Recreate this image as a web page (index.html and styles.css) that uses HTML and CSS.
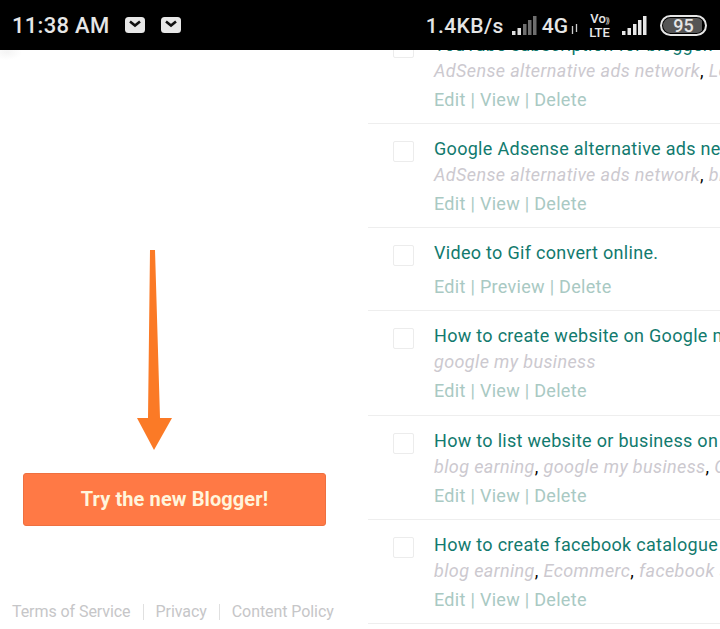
FILE: index.html
```html
<!DOCTYPE html>
<html lang="en">
<head>
<meta charset="utf-8">
<title>Blogger posts</title>
<link rel="stylesheet" href="styles.css">
</head>
<body>
<header class="status">
  <div class="status-left">
    <span class="time">11:38 AM</span>
    <svg class="mail" viewBox="0 0 20 20"><rect x="0" y="2" width="20" height="16" rx="3.5" fill="#e8e8e8"/><path d="M5 6.500l5 4L15 6.500" fill="none" stroke="#111" stroke-width="2.6"/></svg>
    <svg class="mail second" viewBox="0 0 20 20"><rect x="0" y="2" width="20" height="16" rx="3.5" fill="#e8e8e8"/><path d="M5 6.500l5 4L15 6.500" fill="none" stroke="#111" stroke-width="2.6"/></svg>
  </div>
  <div class="status-right">
    <span class="speed">1.4KB/s</span>
    <svg class="signal dim" viewBox="0 0 25 19"><g fill="#e0e0e0"><rect x="0" y="15" width="3.500" height="4"/><rect x="5.500" y="12" width="3.500" height="7"/></g><g fill="#6e6e6e"><rect x="11" y="8" width="3.500" height="11"/><rect x="16" y="4" width="3.500" height="15"/><rect x="21" y="0" width="3.500" height="19"/></g></svg>
    <span class="net">4G</span>
    <svg class="updown" viewBox="0 0 7 10"><path d="M1.500 10V2M5.500 0v8" stroke="#ccc" stroke-width="1.300" fill="none"/></svg>
    <span class="volte"><span>Vo<i>))</i></span><span>LTE</span></span>
    <svg class="signal full" viewBox="0 0 25 19"><rect x="0" y="15" width="3.500" height="4" fill="#e8e8e8"/><rect x="5.500" y="12" width="3.500" height="7" fill="#e8e8e8"/><rect x="11" y="8" width="3.500" height="11" fill="#e8e8e8"/><rect x="16" y="4" width="3.500" height="15" fill="#e8e8e8"/><rect x="21" y="0" width="3.500" height="19" fill="#e8e8e8"/></svg>
    <span class="battery">95</span>
  </div>
</header>
<main class="page">
  <section class="left">
    <svg class="arrow" viewBox="0 0 36 200"><path d="M14 0h5L24 168h12L18 200 1 168h11z" fill="#fb7a26"/></svg>
    <a class="cta">Try the new Blogger!</a>
    <footer class="legal">
      <span>Terms of Service</span><i></i><span>Privacy</span><i></i><span>Content Policy</span>
    </footer>
  </section>
  <section class="posts">
    <article class="post">
      <span class="check"></span>
      <div class="body">
        <h3>YouTube subscription for blogger. Web</h3>
        <p class="labels"><em>AdSense alternative ads network</em>, <em>Lead</em></p>
        <p class="actions">Edit | View | Delete</p>
      </div>
    </article>
    <article class="post">
      <span class="check"></span>
      <div class="body">
        <h3>Google Adsense alternative ads network</h3>
        <p class="labels"><em>AdSense alternative ads network</em>, <em>blog earning</em></p>
        <p class="actions">Edit | View | Delete</p>
      </div>
    </article>
    <article class="post short">
      <span class="check"></span>
      <div class="body">
        <h3>Video to Gif convert online.</h3>
        <p class="actions">Edit | Preview | Delete</p>
      </div>
    </article>
    <article class="post">
      <span class="check"></span>
      <div class="body">
        <h3>How to create website on Google my business</h3>
        <p class="labels"><em>google my business</em></p>
        <p class="actions">Edit | View | Delete</p>
      </div>
    </article>
    <article class="post">
      <span class="check"></span>
      <div class="body">
        <h3>How to list website or business on Google</h3>
        <p class="labels"><em>blog earning</em>, <em>google my business</em>, <em>Google</em></p>
        <p class="actions">Edit | View | Delete</p>
      </div>
    </article>
    <article class="post">
      <span class="check"></span>
      <div class="body">
        <h3>How to create facebook catalogue for shop</h3>
        <p class="labels"><em>blog earning</em>, <em>Ecommerc</em>, <em>facebook shop</em></p>
        <p class="actions">Edit | View | Delete</p>
      </div>
    </article>
  </section>
</main>
</body>
</html>
```
FILE: styles.css
```css
* { box-sizing: border-box; }
html, body { margin: 0; height: 629px; overflow: hidden; background: #fff; }
body { font-family: Roboto, "Liberation Sans", sans-serif; }

.status {
  position: relative;
  z-index: 2;
  height: 50px;
  background: #000;
  color: #e6e6e6;
  display: flex;
  justify-content: space-between;
  align-items: center;
  padding: 1px 13px 0 12px;
}
.status-left, .status-right { display: flex; align-items: center; }
.time { font-size: 22px; font-weight: 500; letter-spacing: .3px; margin-right: 15px; }
.mail { width: 20px; height: 20px; display: block; margin-top: -1px; }
.mail.second { margin-left: 16px; }
.speed { font-size: 21px; font-weight: 500; letter-spacing: .4px; }
.signal { width: 25px; height: 19px; flex: none; }
.signal.dim { margin-left: 8px; }
.signal.full { margin-left: 11px; }
.net { font-size: 21px; font-weight: 500; margin-left: 5px; }
.updown { width: 7px; height: 10px; margin: 6px 0 0 3px; flex: none; }
.volte { width: 23px; margin-left: 10px; display: flex; flex-direction: column; align-items: center; font-size: 13px; font-weight: 500; line-height: 11px; white-space: nowrap; }
.volte i { font-style: normal; font-size: 7px; letter-spacing: -1px; }
.battery {
  width: 47px; height: 21px;
  margin-left: 13px;
  border: 2px solid #e6e6e6;
  border-radius: 11px;
  font-size: 18px; font-weight: 500;
  line-height: 15px;
  text-align: center;
  background: linear-gradient(90deg, #555 0 92%, transparent 92%);
  background-clip: content-box;
  padding: 1px;
}

.page { display: flex; height: 579px; overflow: hidden; }
.left {
  width: 368px; flex: none;
  display: flex; flex-direction: column;
  padding: 200px 0 0 23px;
  background: radial-gradient(closest-side, #f4f4f4, #fff) no-repeat -8px -6px / 30px 16px;
}
.arrow { width: 36px; height: 200px; margin-left: 113px; display: block; flex: none; }
.cta {
  display: block;
  width: 303px; height: 53px;
  margin-top: 23px;
  background: #ff7945;
  border: 1px solid #ee7040;
  border-radius: 3px;
  color: #fff5dc;
  font-size: 20px; font-weight: 700;
  letter-spacing: .1px;
  line-height: 50px;
  text-align: center;
}
.legal {
  display: flex; align-items: center;
  margin: 76px 0 0 -11px;
  font-size: 16px; letter-spacing: -.07px; color: #c6c6c8;
  white-space: nowrap;
}
.legal i { display: block; width: 1px; height: 16px; background: #e0e0e0; margin: 0 12px; }

.posts { flex: 1; min-width: 0; margin-top: -30px; }
.post {
  display: flex;
  height: 104.2px;
  padding-top: 15px;
  border-bottom: 1px solid #eeeeee;
  white-space: nowrap;
}
.post.short { height: 83px; }
.check { flex: none; width: 21px; height: 21px; margin: 2px 20px 0 25px; border: 1.5px solid #ececec; border-radius: 2px; background: #fff; }
.body { min-width: 0; }
h3 { margin: 0; font-size: 18px; font-weight: 400; line-height: 20px; color: #127a6e; letter-spacing: .3px; }
.labels { margin: 5px 0 0; font-size: 18px; line-height: 22px; letter-spacing: .38px; color: #000; }
.labels em { color: #ccc9cf; }
.actions { margin: 8px 0 0; font-size: 18px; line-height: 20px; color: #a9c9c3; letter-spacing: .3px; }
.short .actions { margin-top: 14px; }
```
